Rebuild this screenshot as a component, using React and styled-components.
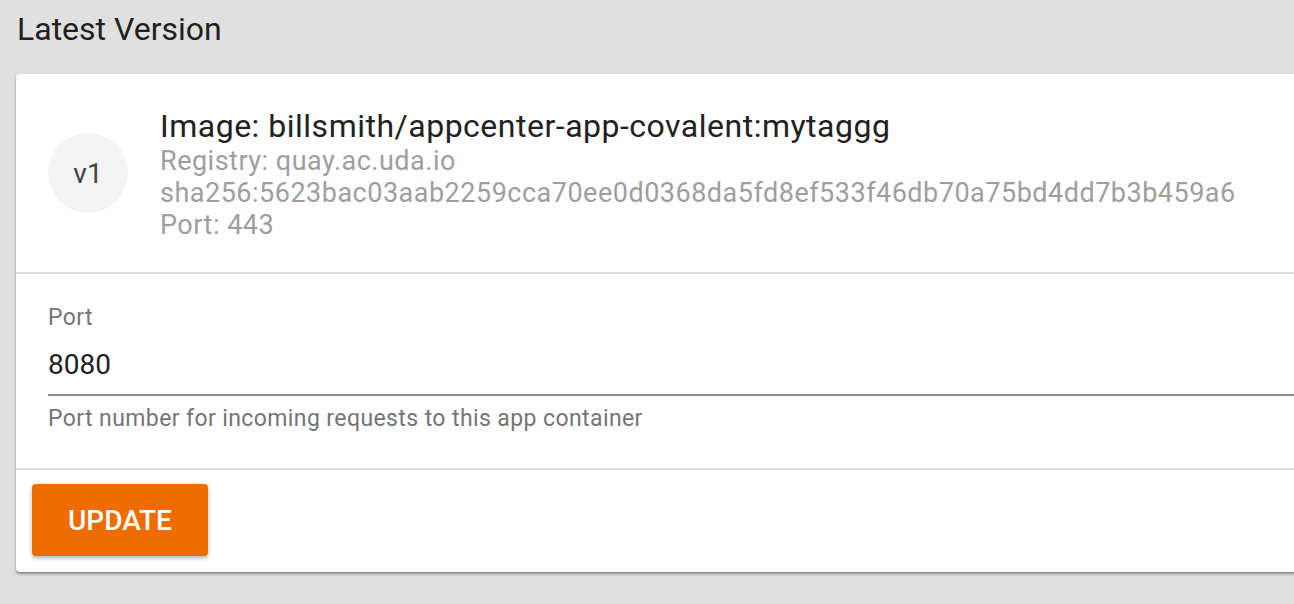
import React from "react";
import styled, { createGlobalStyle } from "styled-components";

const GlobalStyle = createGlobalStyle`
  html, body {
    margin: 0;
    padding: 0;
    background: #e0e0e0;
    font-family: Roboto, "Liberation Sans", sans-serif;
    overflow: hidden;
  }
`;

const Page = styled.div`
  width: 1294px;
  height: 604px;
  padding: 0 0 0 16px;
  box-sizing: border-box;
  overflow: hidden;
`;

const Heading = styled.h2`
  margin: 0;
  padding: 9px 0 0 1px;
  height: 74px;
  box-sizing: border-box;
  font-size: 32px;
  font-weight: 400;
  line-height: 40px;
  color: #212121;
`;

const Card = styled.div`
  width: 1400px;
  background: #fff;
  border-radius: 4px;
  box-shadow: 0 2px 3px rgba(0, 0, 0, 0.35), 0 1px 1px rgba(0, 0, 0, 0.12);
`;

const Section = styled.div`
  padding: ${(p) => p.$pad || "0"};
  border-bottom: ${(p) => (p.$divider ? "2px solid #e0e0e0" : "none")};
`;

const VersionRow = styled.div`
  display: flex;
  align-items: center;
  gap: 32px;
  height: 198px;
  padding-left: 32px;
`;

const Avatar = styled.div`
  width: 80px;
  height: 80px;
  border-radius: 50%;
  background: #f4f4f4;
  color: #444;
  font-size: 28px;
  display: flex;
  align-items: center;
  justify-content: center;
  flex-shrink: 0;
`;

const Info = styled.div`
  display: flex;
  flex-direction: column;
  margin-top: 2px;
`;

const ImageName = styled.div`
  font-size: 32px;
  letter-spacing: 0.5px;
  line-height: 38px;
  color: #212121;
`;

const Meta = styled.div`
  font-size: 27px;
  letter-spacing: 0.5px;
  line-height: 32px;
  color: #9e9e9e;
`;

const Field = styled.div`
  display: flex;
  flex-direction: column;
`;

const Label = styled.label`
  font-size: 23px;
  letter-spacing: 0.4px;
  line-height: 28px;
  color: #757575;
`;

const Input = styled.input`
  border: none;
  border-bottom: 2px solid #8a8a8a;
  outline: none;
  padding: 15px 0 11px;
  font-family: inherit;
  font-size: 28px;
  line-height: 36px;
  color: #212121;
  background: transparent;
`;

const Helper = styled.div`
  margin-top: 9px;
  font-size: 23px;
  letter-spacing: 0.4px;
  line-height: 28px;
  color: #757575;
`;

const Button = styled.button`
  display: block;
  width: 176px;
  height: 72px;
  border: none;
  border-radius: 4px;
  background: #ef6c00;
  color: #fff;
  font-family: inherit;
  font-size: 28px;
  font-weight: 500;
  box-shadow: 0 2px 4px rgba(0, 0, 0, 0.3);
  cursor: pointer;
`;

export default function App() {
  return (
    <Page>
      <GlobalStyle />
      <Heading>Latest Version</Heading>
      <Card>
        <Section $divider>
          <VersionRow>
            <Avatar>v1</Avatar>
            <Info>
              <ImageName>Image: billsmith/appcenter-app-covalent:mytaggg</ImageName>
              <Meta>Registry: quay.ac.uda.io</Meta>
              <Meta>sha256:5623bac03aab2259cca70ee0d0368da5fd8ef533f46db70a75bd4dd7b3b459a6</Meta>
              <Meta>Port: 443</Meta>
            </Info>
          </VersionRow>
        </Section>
        <Section $divider $pad="30px 32px 35px">
          <Field>
            <Label>Port</Label>
            <Input defaultValue="8080" />
            <Helper>Port number for incoming requests to this app container</Helper>
          </Field>
        </Section>
        <Section $pad="14px 16px 16px">
          <Button>UPDATE</Button>
        </Section>
      </Card>
    </Page>
  );
}
